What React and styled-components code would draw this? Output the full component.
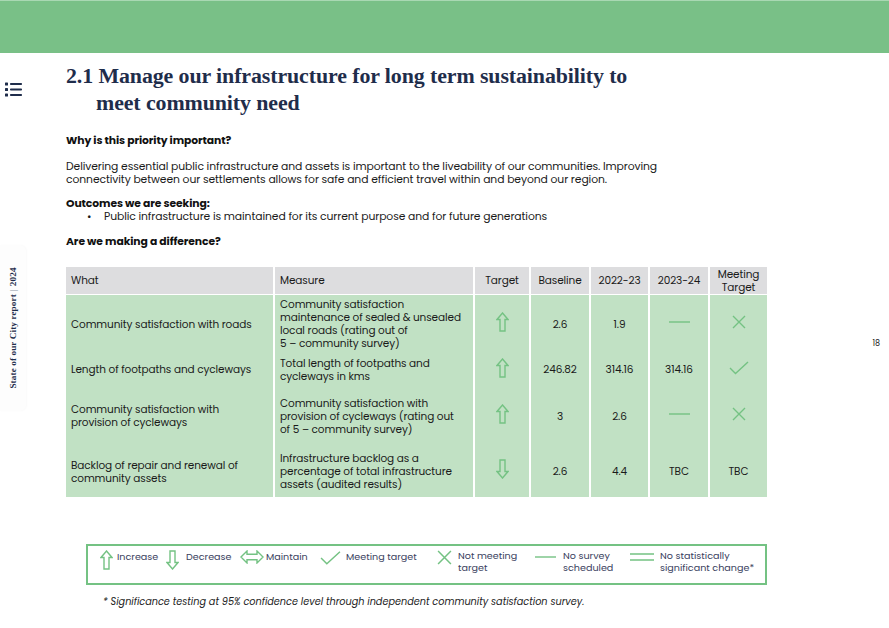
import React from "react";
import styled, { createGlobalStyle } from "styled-components";

const Global = createGlobalStyle`
  html, body { margin: 0; padding: 0; background: #ffffff; }
  body { width: 889px; height: 628px; overflow: hidden; font-family: "Poppins", "Open Sans", sans-serif; }
  * { box-sizing: border-box; }
`;

const GREEN = "#74c283";
const NAVY = "#1f2d4b";

const Page = styled.div`
  width: 889px;
  height: 628px;
  display: flex;
  flex-direction: column;
`;

const HeaderBar = styled.div`
  height: 53px;
  flex: none;
  background: #79c087;
  border-top: 1px solid #a9d8b3;
`;

const Body = styled.div`
  flex: 1;
  display: flex;
`;

const LeftRail = styled.div`
  width: 66px;
  flex: none;
  display: flex;
  flex-direction: column;
  align-items: flex-start;
`;

const MenuButton = styled.div`
  margin: 29px 0 0 5px;
  width: 17px;
  height: 15px;
  display: flex;
`;

const SideTab = styled.div`
  margin-top: 148px;
  width: 26px;
  height: 166px;
  border-radius: 0 6px 6px 0;
  background: #fdfdfd;
  box-shadow: 1px 0 2px rgba(0, 0, 0, 0.025);
  display: flex;
  align-items: center;
  justify-content: center;
`;

const SideText = styled.div`
  transform: rotate(-90deg);
  white-space: nowrap;
  font-family: "Liberation Serif", "DejaVu Serif", serif;
  font-weight: bold;
  font-size: 9.2px;
  color: ${NAVY};
  letter-spacing: 0.1px;
`;

const Sep = styled.span`
  font-weight: normal;
  margin: 0 3px;
  color: #8a90a0;
`;

const Main = styled.div`
  flex: 1;
  display: flex;
  flex-direction: column;
  padding-top: 9px;
`;

const Title = styled.h1`
  margin: 0;
  width: 585px;
  padding-left: 30px;
  text-indent: -30px;
  font-family: "Liberation Serif", "DejaVu Serif", serif;
  font-weight: bold;
  font-size: 21.9px;
  line-height: 27px;
  color: ${NAVY};
  letter-spacing: -0.1px;
`;

const Heading = styled.div`
  font-family: "Poppins", "Open Sans", sans-serif;
  font-weight: 700;
  font-size: 10.8px;
  line-height: 13px;
  color: #111;
  margin-top: ${(p) => p.$mt}px;
  letter-spacing: -0.1px;
`;

const Para = styled.p`
  margin: ${(p) => p.$mt}px 0 0 0;
  width: 620px;
  font-size: 10.8px;
  line-height: 13px;
  color: #1a1a1a;
  letter-spacing: -0.1px;
`;

const Bullets = styled.ul`
  margin: 0;
  padding: 0 0 0 38px;
  list-style: none;
`;

const Bullet = styled.li`
  position: relative;
  font-size: 10.8px;
  line-height: 13px;
  color: #1a1a1a;
  letter-spacing: -0.1px;
  &::before {
    content: "•";
    position: absolute;
    left: -17px;
  }
`;

const Table = styled.div`
  margin-top: 19px;
  width: 701px;
  display: grid;
  grid-template-columns: 207px 200px 56px 60px 59px 60px 59px;
`;

const HeadCell = styled.div`
  background: #dddddf;
  height: 28px;
  display: flex;
  align-items: center;
  justify-content: ${(p) => (p.$left ? "flex-start" : "center")};
  text-align: ${(p) => (p.$left ? "left" : "center")};
  padding: 0 ${(p) => (p.$left ? "5px" : "2px")};
  font-size: 10.5px;
  line-height: 13px;
  color: #1a1a1a;
  border-left: ${(p) => (p.$first ? "none" : "2px solid #ffffff")};
  border-bottom: 1px solid #ffffff;
  letter-spacing: -0.1px;
`;

const Cell = styled.div`
  background: #c1e1c4;
  height: ${(p) => p.$h}px;
  display: flex;
  align-items: center;
  justify-content: ${(p) => (p.$left ? "flex-start" : "center")};
  padding: 0 ${(p) => (p.$left ? "5px" : "2px")};
  font-size: 10.5px;
  line-height: 13px;
  color: #1a1a1a;
  border-left: ${(p) => (p.$first ? "none" : "2px solid #ffffff")};
  letter-spacing: -0.1px;
`;

const IconSlot = styled.div`
  display: flex;
  margin-top: ${(p) => p.$lift || 0}px;
`;

const Legend = styled.div`
  margin: 47px 0 0 20px;
  width: 681px;
  height: 41px;
  border: 2px solid ${GREEN};
  display: flex;
  align-items: flex-start;
  padding: 4px 0 0 12px;
`;

const LegendItem = styled.div`
  display: flex;
  align-items: flex-start;
  gap: ${(p) => p.$gap}px;
  width: ${(p) => p.$w}px;
  flex: none;
`;

const LegendText = styled.div`
  font-size: 9.6px;
  line-height: 12px;
  color: #3a4260;
  white-space: nowrap;
  margin-top: ${(p) => p.$mt || 0}px;
`;

const Footnote = styled.div`
  margin: 11px 0 0 37px;
  font-style: italic;
  font-size: 9.7px;
  line-height: 12px;
  color: #222;
`;

const RightRail = styled.div`
  width: 122px;
  flex: none;
  display: flex;
  align-items: center;
  justify-content: flex-end;
  padding-right: 9px;
  padding-top: 6px;
`;

const PageNum = styled.div`
  font-size: 8px;
  color: #222;
`;

const Svg = styled.svg`
  display: block;
  flex: none;
`;

const stroke = { fill: "none", stroke: GREEN, strokeWidth: 1.4, strokeLinejoin: "miter" };

const UpArrow = ({ w = 13, h = 20 }) => (
  <Svg width={w} height={h} viewBox="0 0 13 20">
    <path d="M6.5 1 L12 7.5 H9 V19 H4 V7.5 H1 Z" {...stroke} />
  </Svg>
);
const DownArrow = ({ w = 13, h = 20 }) => (
  <Svg width={w} height={h} viewBox="0 0 13 20">
    <path d="M6.5 19 L12 12.5 H9 V1 H4 V12.5 H1 Z" {...stroke} />
  </Svg>
);
const BothArrow = () => (
  <Svg width={24} height={14} viewBox="0 0 24 14">
    <path d="M1 7 L7 1 V4.3 H17 V1 L23 7 L17 13 V9.7 H7 V13 Z" {...stroke} />
  </Svg>
);
const Check = ({ w = 20, h = 14 }) => (
  <Svg width={w} height={h} viewBox="0 0 20 14">
    <polyline points="1,7 6.5,12.5 19,1" {...stroke} />
  </Svg>
);
const Cross = ({ s = 14 }) => (
  <Svg width={s} height={s} viewBox="0 0 14 14">
    <path d="M1 1 L13 13 M13 1 L1 13" {...stroke} />
  </Svg>
);
const Dash = ({ w = 20, h = 4 }) => (
  <Svg width={w} height={h} viewBox={`0 0 ${w} ${h}`}>
    <path d={`M0 ${h / 2} H${w}`} {...stroke} />
  </Svg>
);
const DoubleDash = () => (
  <Svg width={24} height={14} viewBox="0 0 24 14">
    <path d="M0 4 H24 M0 10 H24" {...stroke} />
  </Svg>
);

const MenuIcon = () => (
  <Svg width={17} height={15} viewBox="0 0 17 15">
    <g fill={NAVY}>
      <rect x="0" y="0.5" width="3" height="3" rx="0.6" />
      <rect x="0" y="6" width="3" height="3" rx="0.6" />
      <rect x="0" y="11.5" width="3" height="3" rx="0.6" />
      <rect x="5" y="1" width="12" height="2" rx="0.8" />
      <rect x="5" y="6.5" width="12" height="2" rx="0.8" />
      <rect x="5" y="12" width="12" height="2" rx="0.8" />
    </g>
  </Svg>
);

const rows = [
  {
    h: 58,
    what: "Community satisfaction with roads",
    measure: ["Community satisfaction", "maintenance of sealed & unsealed", "local roads (rating out of", "5 – community survey)"],
    target: "up",
    baseline: "2.6",
    y1: "1.9",
    y2: "dash",
    meet: "x",
  },
  {
    h: 33,
    what: "Length of footpaths and cycleways",
    measure: ["Total length of footpaths and", "cycleways in kms"],
    target: "up",
    baseline: "246.82",
    y1: "314.16",
    y2: "314.16",
    meet: "check",
  },
  {
    h: 60,
    what: "Community satisfaction with\nprovision of cycleways",
    measure: ["Community satisfaction with", "provision of cycleways (rating out", "of 5 – community survey)"],
    target: "up",
    baseline: "3",
    y1: "2.6",
    y2: "dash",
    meet: "x",
  },
  {
    h: 51,
    what: "Backlog of repair and renewal of\ncommunity assets",
    measure: ["Infrastructure backlog as a", "percentage of total infrastructure", "assets (audited results)"],
    target: "down",
    baseline: "2.6",
    y1: "4.4",
    y2: "TBC",
    meet: "TBC",
  },
];

const renderVal = (v) => {
  if (v === "dash") return <IconSlot $lift={-4}><Dash w={21} /></IconSlot>;
  if (v === "x") return <IconSlot $lift={-4}><Cross s={14} /></IconSlot>;
  if (v === "check") return <IconSlot $lift={-4}><Check w={20} h={14} /></IconSlot>;
  if (v === "up") return <IconSlot $lift={-4}><UpArrow /></IconSlot>;
  if (v === "down") return <IconSlot $lift={-6}><DownArrow /></IconSlot>;
  return v;
};

const Lines = ({ text }) =>
  text.split("\n").map((t, i, a) => (
    <React.Fragment key={i}>
      {t}
      {i < a.length - 1 && <br />}
    </React.Fragment>
  ));

export default function App() {
  return (
    <Page>
      <Global />
      <HeaderBar />
      <Body>
        <LeftRail>
          <MenuButton>
            <MenuIcon />
          </MenuButton>
          <SideTab>
            <SideText>
              State of our City report<Sep>|</Sep>2024
            </SideText>
          </SideTab>
        </LeftRail>
        <Main>
          <Title>2.1 Manage our infrastructure for long term sustainability to meet community need</Title>
          <Heading $mt={18}>Why is this priority important?</Heading>
          <Para $mt={13}>
            Delivering essential public infrastructure and assets is important to the liveability of our communities. Improving
            connectivity between our settlements allows for safe and efficient travel within and beyond our region.
          </Para>
          <Heading $mt={11}>Outcomes we are seeking:</Heading>
          <Bullets>
            <Bullet>Public infrastructure is maintained for its current purpose and for future generations</Bullet>
          </Bullets>
          <Heading $mt={12}>Are we making a difference?</Heading>
          <Table>
            <HeadCell $left $first>What</HeadCell>
            <HeadCell $left>Measure</HeadCell>
            <HeadCell>Target</HeadCell>
            <HeadCell>Baseline</HeadCell>
            <HeadCell>2022-23</HeadCell>
            <HeadCell>2023-24</HeadCell>
            <HeadCell>
              Meeting
              <br />
              Target
            </HeadCell>
            {rows.map((r, i) => (
              <React.Fragment key={i}>
                <Cell $h={r.h} $left $first>
                  <div>
                    <Lines text={r.what} />
                  </div>
                </Cell>
                <Cell $h={r.h} $left>
                  <div>
                    {r.measure.map((m, j) => (
                      <div key={j}>{m}</div>
                    ))}
                  </div>
                </Cell>
                <Cell $h={r.h}>{renderVal(r.target)}</Cell>
                <Cell $h={r.h}>{renderVal(r.baseline)}</Cell>
                <Cell $h={r.h}>{renderVal(r.y1)}</Cell>
                <Cell $h={r.h}>{renderVal(r.y2)}</Cell>
                <Cell $h={r.h}>{renderVal(r.meet)}</Cell>
              </React.Fragment>
            ))}
          </Table>
          <Legend>
            <LegendItem $gap={4} $w={66}>
              <UpArrow />
              <LegendText $mt={1}>Increase</LegendText>
            </LegendItem>
            <LegendItem $gap={7} $w={74}>
              <DownArrow />
              <LegendText $mt={1}>Decrease</LegendText>
            </LegendItem>
            <LegendItem $gap={2} $w={80}>
              <BothArrow />
              <LegendText $mt={1}>Maintain</LegendText>
            </LegendItem>
            <LegendItem $gap={5} $w={117}>
              <Svg width={21} height={16} viewBox="0 0 20 14">
                <polyline points="1,7 6.5,12.5 19,1" {...stroke} />
              </Svg>
              <LegendText $mt={1}>Meeting target</LegendText>
            </LegendItem>
            <LegendItem $gap={6} $w={98}>
              <Cross s={15} />
              <LegendText>
                Not meeting
                <br />
                target
              </LegendText>
            </LegendItem>
            <LegendItem $gap={7} $w={95}>
              <Dash w={21} h={14} />
              <LegendText>
                No survey
                <br />
                scheduled
              </LegendText>
            </LegendItem>
            <LegendItem $gap={6} $w={130}>
              <DoubleDash />
              <LegendText>
                No statistically
                <br />
                significant change*
              </LegendText>
            </LegendItem>
          </Legend>
          <Footnote>* Significance testing at 95% confidence level through independent community satisfaction survey.</Footnote>
        </Main>
        <RightRail>
          <PageNum>18</PageNum>
        </RightRail>
      </Body>
    </Page>
  );
}
